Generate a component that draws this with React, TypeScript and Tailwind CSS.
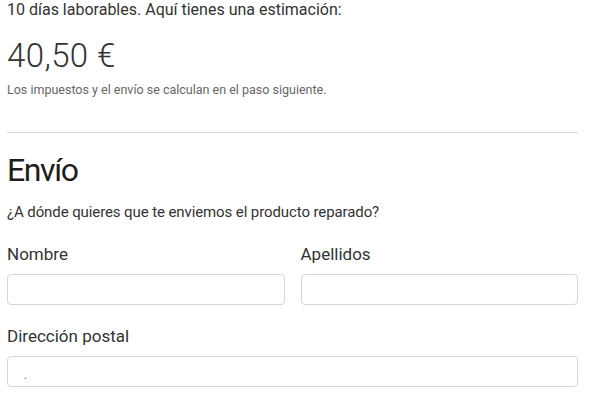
export default function App() {
  return (
    <div className="min-h-screen bg-white font-['Roboto',sans-serif]">
      <div className="w-[571px] pl-[7px] box-content">
        {/* Estimación */}
        <p className="text-[16px] leading-[20px] text-[#333]">
          10 días laborables. Aquí tienes una estimación:
        </p>
        <p className="mt-[17px] text-[33px] leading-[38px] font-light tracking-[0.4px] text-[#333]">40,50 €</p>
        <p className="mt-[7px] text-[12.5px] leading-[16px] text-[#666]">
          Los impuestos y el envío se calculan en el paso siguiente.
        </p>

        <hr className="mt-[34px] border-t border-[#d6d6d6]" />

        {/* Envío */}
        <h2 className="mt-[17px] text-[32px] leading-[40px] font-normal tracking-[-1.4px] text-[#1d1d1d]">Envío</h2>
        <p className="mt-[12px] text-[15px] leading-[20px] tracking-[-0.1px] text-[#333]">
          ¿A dónde quieres que te enviemos el producto reparado?
        </p>

        <div className="mt-[22px] grid grid-cols-2 gap-x-4">
          <label className="flex flex-col">
            <span className="text-[17px] leading-[20px] text-[#333]">Nombre</span>
            <input className="mt-[10px] h-[31px] rounded-[4px] border border-[#d6d6d6] px-4 outline-none" />
          </label>
          <label className="flex flex-col">
            <span className="text-[17px] leading-[20px] text-[#333]">Apellidos</span>
            <input className="mt-[10px] h-[31px] rounded-[4px] border border-[#d6d6d6] px-4 outline-none" />
          </label>
        </div>

        <label className="mt-[21px] flex flex-col">
          <span className="text-[17px] leading-[20px] text-[#333]">Dirección postal</span>
          <div className="mt-[10px] flex h-[31px] items-end rounded-[4px] border border-[#d6d6d6] px-4 pb-[5px]">
            <span className="text-[12px] leading-none text-[#666]">.</span>
          </div>
        </label>
      </div>
    </div>
  )
}
